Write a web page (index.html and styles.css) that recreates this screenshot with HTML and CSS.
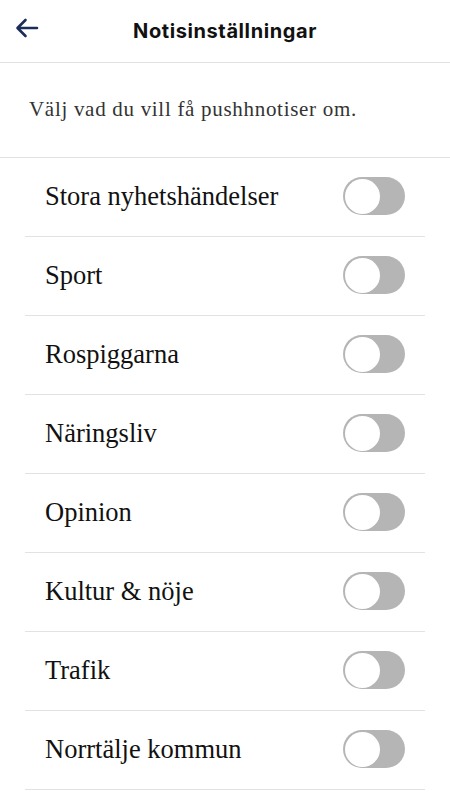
FILE: index.html
```html
<!DOCTYPE html>
<html lang="sv">
<head>
<meta charset="utf-8">
<link rel="stylesheet" href="styles.css">
</head>
<body>
<header class="topbar">
  <button class="back" aria-label="Tillbaka">
    <svg width="24" height="20" viewBox="0 0 24 20"><path d="M22 10H3M10.5 2 2.5 10l8 8" fill="none" stroke="#1c2d5a" stroke-width="2.6" stroke-linecap="round" stroke-linejoin="round"/></svg>
  </button>
  <h1 class="title">Notisinställningar</h1>
</header>
<p class="intro">Välj vad du vill få pushhnotiser om.</p>
<ul class="list">
  <li class="row"><span class="label">Stora nyhetshändelser</span><span class="toggle"><span class="knob"></span></span></li>
  <li class="row"><span class="label">Sport</span><span class="toggle"><span class="knob"></span></span></li>
  <li class="row"><span class="label">Rospiggarna</span><span class="toggle"><span class="knob"></span></span></li>
  <li class="row"><span class="label">Näringsliv</span><span class="toggle"><span class="knob"></span></span></li>
  <li class="row"><span class="label">Opinion</span><span class="toggle"><span class="knob"></span></span></li>
  <li class="row"><span class="label">Kultur &amp; nöje</span><span class="toggle"><span class="knob"></span></span></li>
  <li class="row"><span class="label">Trafik</span><span class="toggle"><span class="knob"></span></span></li>
  <li class="row"><span class="label">Norrtälje kommun</span><span class="toggle"><span class="knob"></span></span></li>
</ul>
</body>
</html>
```
FILE: styles.css
```css
* { box-sizing: border-box; }
html, body { margin: 0; padding: 0; background: #fff; }
body { width: 450px; overflow: hidden; }
.topbar {
  height: 63px;
  display: flex;
  align-items: center;
  justify-content: center;
  position: relative;
  border-bottom: 1px solid #e2e2e2;
}
.back {
  position: absolute;
  left: 15px;
  top: 18px;
  background: none;
  border: 0;
  padding: 0;
  width: 24px;
  height: 20px;
  display: flex;
  align-items: center;
}
.title {
  margin: 0;
  font-family: Inter, "Liberation Sans", sans-serif;
  font-weight: 700;
  font-size: 20px;
  letter-spacing: 0.6px;
  color: #111;
  padding-bottom: 1px;
}
.intro {
  margin: 0;
  height: 95px;
  display: flex;
  align-items: center;
  padding: 0 29px 2px;
  font-family: "Liberation Serif", "Times New Roman", serif;
  font-size: 21px;
  letter-spacing: 0.7px;
  color: #333;
  border-bottom: 1px solid #e2e2e2;
}
.list {
  list-style: none;
  margin: 0;
  padding: 0 25px;
}
.row {
  height: 79px;
  display: flex;
  align-items: center;
  justify-content: space-between;
  padding: 0 20px;
  border-bottom: 1px solid #e2e2e2;
}
.label {
  font-family: "Liberation Serif", "Times New Roman", serif;
  font-size: 26.5px;
  color: #111;
  padding-bottom: 2px;
}
.toggle {
  width: 62px;
  height: 38px;
  border-radius: 19px;
  background: #b5b5b5;
  display: flex;
  align-items: center;
  padding: 0 1.5px;
  margin-bottom: 2px;
}
.knob {
  width: 35px;
  height: 35px;
  border-radius: 50%;
  background: #fff;
}
```
